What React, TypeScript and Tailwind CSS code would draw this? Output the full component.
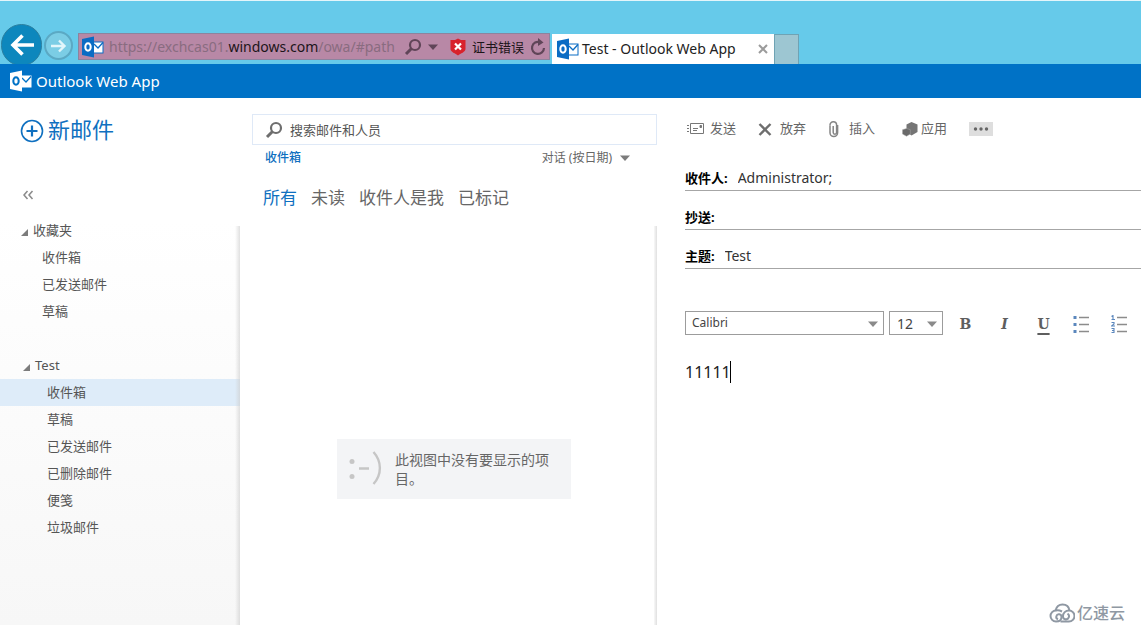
import { useState } from "react";

const FAVORITES = ["收件箱", "已发送邮件", "草稿"];

const FOLDERS = ["收件箱", "草稿", "已发送邮件", "已删除邮件", "便笺", "垃圾邮件"];

const FILTERS = ["所有", "未读", "收件人是我", "已标记"];

function OutlookLogo({ inverted = false }: { inverted?: boolean }) {
  const front = inverted ? "#ffffff" : "#0a6cc4";
  const back = inverted ? "#0072c6" : "#ffffff";
  return (
    <svg viewBox="0 0 22 22" className="h-[22px] w-[22px] shrink-0" aria-hidden="true">
      <rect x="11" y="6" width="10" height="11" fill={inverted ? front : back} stroke={front} />
      <path
        d="M12 8l4 4 5-5.500"
        fill="none"
        stroke={inverted ? back : front}
        strokeWidth="1.300"
      />
      <path d="M0 3L12 0.500V21.500L0 19z" fill={front} />
      <ellipse cx="6" cy="11" rx="2.700" ry="3.700" fill="none" stroke={back} strokeWidth="2" />
    </svg>
  );
}

function SearchIcon({ className }: { className: string }) {
  return (
    <svg viewBox="0 0 18 18" className={className} fill="none" stroke="currentColor" aria-hidden="true">
      <circle cx="11" cy="7" r="5" strokeWidth="2.200" />
      <path d="M7.500 10.500L2 16" strokeWidth="3" />
    </svg>
  );
}

function Caret({ className = "" }: { className?: string }) {
  return (
    <svg viewBox="0 0 10 6" className={`h-1.5 w-2.5 shrink-0 ${className}`} aria-hidden="true">
      <path d="M0 0.500h10L5 6z" fill="currentColor" />
    </svg>
  );
}

function BrowserBar() {
  return (
    <div className="flex h-16 items-end border-t border-[#e4f5fa] bg-[#66caea] pl-px">
      <div className="flex h-10 items-start overflow-hidden">
        <button
          type="button"
          aria-label="后退"
          className="flex h-[42px] w-[41px] shrink-0 items-center justify-center rounded-full border border-[#2c7f9f] bg-[#0d87bd] text-white"
        >
          <svg viewBox="0 0 24 24" className="h-6 w-6" fill="none" stroke="currentColor" strokeWidth="3.600">
            <path d="M24 12H3M12.500 2.500L3 12l9.500 9.500" />
          </svg>
        </button>
      </div>
      <button
        type="button"
        aria-label="前进"
        className="mb-1 ml-0.5 flex h-[29px] w-[29px] shrink-0 items-center justify-center rounded-full border-2 border-[#5ba9c4] bg-[#7bcde5] text-[#e2f6fb]"
      >
        <svg viewBox="0 0 16 16" className="h-4 w-4" fill="none" stroke="currentColor" strokeWidth="2.400">
          <path d="M0 8h13M8 2.500L13.500 8 8 13.500" />
        </svg>
      </button>

      <div className="mb-1 ml-[5px] flex h-[27px] w-[472px] shrink-0 items-center border border-[#8c849e] bg-[#b888a6] px-[3px]">
        <OutlookLogo />
        <span className="ml-[5px] grow whitespace-nowrap text-[14px] leading-5 text-[#896c80]">
          https://exchcas01.<span className="text-[#1c1519]">windows.com</span>/owa/#path
        </span>
        <button type="button" aria-label="搜索" className="text-[#604558]">
          <SearchIcon className="h-[18px] w-[18px]" />
        </button>
        <button type="button" aria-label="地址列表" className="ml-1.5 flex items-center text-[#604558]">
          <Caret />
        </button>
        <svg viewBox="0 0 16 18" className="ml-3 h-[18px] w-4 shrink-0" aria-hidden="true">
          <path d="M8 0.500l3 1.500h4.500v9c0 3-5 4.500-7.500 6.500-2.500-2-7.500-3.500-7.500-6.500v-9h4.500z" fill="#d8222c" />
          <path d="M5 5.500l6 6M11 5.500l-6 6" stroke="#fff" strokeWidth="2.200" />
        </svg>
        <button type="button" className="ml-1.5 shrink-0 whitespace-nowrap text-[13px] leading-5 text-[#1c1519]">
          证书错误
        </button>
        <button type="button" aria-label="刷新" className="ml-1.5 text-[#604558]">
          <svg viewBox="0 0 16 18" className="h-[18px] w-4" fill="none" aria-hidden="true">
            <path d="M10 4.200A6 6 0 1 0 14 10" stroke="currentColor" strokeWidth="2.200" />
            <path d="M8 0v8l5.500-3.500z" fill="currentColor" />
          </svg>
        </button>
      </div>

      <div className="ml-0.5 flex h-[30px] w-[222px] shrink-0 items-center bg-white pl-[5px] pr-1.5">
        <OutlookLogo />
        <span className="ml-[3px] grow whitespace-nowrap text-[14px] leading-5 text-[#222222]">
          Test - Outlook Web App
        </span>
        <button type="button" aria-label="关闭选项卡" className="text-[#9b9b9b]">
          <svg viewBox="0 0 10 10" className="h-2.5 w-2.5" stroke="currentColor" strokeWidth="2">
            <path d="M1 1l8 8M9 1L1 9" />
          </svg>
        </button>
      </div>
      <button
        type="button"
        aria-label="新建选项卡"
        className="h-[30px] w-[25px] shrink-0 border border-b-0 border-[#6fa3b4] bg-[#9dc6d2]"
      />
    </div>
  );
}

function GroupHeader({ label, className }: { label: string; className: string }) {
  return (
    <button type="button" className={`flex h-5 items-center text-[13px] leading-5 ${className}`}>
      <svg viewBox="0 0 8 8" className="mr-[5px] mt-1 h-2 w-2" aria-hidden="true">
        <path d="M8 1v7H1z" fill="#7c7c7c" />
      </svg>
      {label}
    </button>
  );
}

function Sidebar() {
  const [selected, setSelected] = useState("收件箱");

  return (
    <aside className="relative flex w-60 shrink-0 flex-col">
      <button type="button" className="ml-5 mt-[15px] flex h-8 items-center gap-1 self-start text-[#0f70c0]">
        <svg viewBox="0 0 24 24" className="mt-1 h-6 w-6" fill="none" stroke="currentColor" aria-hidden="true">
          <circle cx="12" cy="12" r="10.500" strokeWidth="1.600" />
          <path d="M12 6.500v11M6.500 12h11" strokeWidth="2.200" />
        </svg>
        <span className="text-[22px] leading-8">新邮件</span>
      </button>
      <button
        type="button"
        aria-label="折叠"
        className="ml-[22px] mt-10 flex h-5 w-3 items-center text-[#8a8a8a]"
      >
        <svg viewBox="0 0 12 10" className="h-2.5 w-3" fill="none" stroke="currentColor" strokeWidth="1.500">
          <path d="M5.500 1L2 5l3.500 4M10.500 1L7 5l3.500 4" />
        </svg>
      </button>

      <nav className="mt-[15px] grow bg-linear-to-b from-white to-[#f7f7f7] text-[13px] text-[#555555]">
        <GroupHeader label="收藏夹" className="pl-5" />
        <ul className="mt-1">
          {FAVORITES.map((name) => (
            <li key={name}>
              <button type="button" className="flex h-[27px] w-full items-center pl-[42px]">
                {name}
              </button>
            </li>
          ))}
        </ul>
        <GroupHeader label="Test" className="mt-[30px] pl-[22px]" />
        <ul className="mt-1">
          {FOLDERS.map((name) => (
            <li key={name}>
              <button
                type="button"
                onClick={() => setSelected(name)}
                className={`flex h-[27px] w-full items-center pl-[47px] ${
                  selected === name ? "bg-[#deecf9]" : ""
                }`}
              >
                {name}
              </button>
            </li>
          ))}
        </ul>
      </nav>
      <div className="pointer-events-none absolute bottom-0 right-0 top-[128px] w-[5px] bg-linear-to-r from-transparent to-[#cccccc]/60" />
    </aside>
  );
}

function MessageList() {
  const [filter, setFilter] = useState("所有");

  return (
    <section className="relative flex w-[417px] shrink-0 flex-col pl-3">
      <div className="mt-4 flex h-[31px] items-center border border-[#dfe9f7] pl-3">
        <SearchIcon className="h-[18px] w-[18px] shrink-0 text-[#6e6e6e]" />
        <input
          type="search"
          aria-label="搜索邮件和人员"
          placeholder="搜索邮件和人员"
          className="ml-[7px] min-w-0 grow bg-transparent text-[13px] leading-5 outline-none placeholder:text-[#555555]"
        />
      </div>
      <div className="flex h-6 items-center justify-between pl-[13px] pr-[27px] pt-0.5 text-[12px]">
        <span className="font-medium text-[#0f70c0]">收件箱</span>
        <button type="button" className="flex items-center gap-2 text-[#666666]">
          对话 (按日期)
          <Caret className="text-[#7c7c7c]" />
        </button>
      </div>
      <div className="mt-[13px] flex h-8 items-center gap-3.5 pl-[11px] text-[17px]">
        {FILTERS.map((name) => (
          <button
            key={name}
            type="button"
            onClick={() => setFilter(name)}
            className={filter === name ? "text-[#0f70c0]" : "text-[#666666]"}
          >
            {name}
          </button>
        ))}
      </div>
      <div className="ml-[85px] mt-[225px] flex h-[60px] w-[234px] items-center bg-[#f3f4f6] pl-3">
        <svg viewBox="0 0 34 36" className="h-9 w-[34px] shrink-0" fill="none" aria-hidden="true">
          <circle cx="3" cy="10.500" r="2.500" fill="#c6c6c6" />
          <circle cx="3" cy="25.500" r="2.500" fill="#c6c6c6" />
          <path d="M10 17.500h10M24.500 1c8.500 9.500 8.500 22.500 0 32" stroke="#c6c6c6" strokeWidth="2.400" />
        </svg>
        <p className="ml-3 w-40 text-[14px] leading-[19px] text-[#666666]">此视图中没有要显示的项目。</p>
      </div>
      <div className="pointer-events-none absolute bottom-0 right-0 top-[128px] w-[3px] bg-linear-to-r from-[#f8f8f8] to-[#e0e0e0]" />
    </section>
  );
}

function ComposeToolbar() {
  return (
    <div className="mt-[19px] flex h-6 items-center gap-[22px] pl-px text-[13px] text-[#666666]">
      <button type="button" className="flex items-center gap-1.5">
        <svg viewBox="0 0 18 14" className="h-3.5 w-[18px]" fill="none" stroke="#777777" aria-hidden="true">
          <path d="M4.500 1.500h13v10h-13zM1 3.500h2M1 6.500h2M1 9.500h2M7 6.500h5M7 8.500h4" />
          <path d="M14 3.500h1.500v2H14z" fill="#777777" />
        </svg>
        发送
      </button>
      <button type="button" className="flex items-center gap-1.5">
        <svg viewBox="0 0 16 14" className="h-3.5 w-4" fill="none" stroke="#6e6e6e" strokeWidth="2.400" aria-hidden="true">
          <path d="M1.500 2l11 11M12.500 2l-11 11" />
        </svg>
        放弃
      </button>
      <button type="button" className="flex items-center gap-1.5">
        <svg viewBox="-1 -1 15 18" className="h-[18px] w-[15px]" fill="none" stroke="#858585" strokeWidth="1.500" aria-hidden="true">
          <path d="M1 4.500V4a3.300 3.300 0 0 1 6.600 0v7.500a1.700 1.700 0 0 1-3.400 0V5" />
          <path d="M1 4.500v7.300a3.600 3.600 0 0 0 7.600 0V4" />
        </svg>
        插入
      </button>
      <button type="button" className="flex items-center gap-[3px]">
        <svg viewBox="0 0 21 16" className="h-4 w-[21px]" aria-hidden="true">
          <path d="M14.500 1l6 2.500v7.500l-6 3.500-5-3.500V3.500z" fill="#757575" />
          <path d="M9.500 7.500l3.800 1.200v4.300l-3.800 2.200L5.500 13V8.700z" fill="#6a6a6a" stroke="#a8a8a8" strokeWidth="0.500" />
        </svg>
        应用
      </button>
      <button
        type="button"
        aria-label="更多"
        className="flex h-3.5 w-6 items-center justify-center bg-[#dedede]"
      >
        <svg viewBox="0 0 16 4" className="h-1 w-4" fill="#666666">
          <circle cx="2.500" cy="2" r="1.700" />
          <circle cx="8" cy="2" r="1.700" />
          <circle cx="13.500" cy="2" r="1.700" />
        </svg>
      </button>
    </div>
  );
}

function Field({ id, label, value }: { id: string; label: string; value: string }) {
  return (
    <div className="flex h-[39px] items-end border-b border-[#a6a6a6] pb-0.5">
      <label htmlFor={id} className="shrink-0 text-[13px] font-bold leading-5 text-black">
        {label}
      </label>
      <input
        id={id}
        defaultValue={value}
        className="ml-2.5 h-5 min-w-0 grow bg-transparent text-[14px] leading-5 text-[#333333] outline-none"
      />
    </div>
  );
}

function FormatBar() {
  return (
    <div className="mt-[42px] flex h-6 items-center">
      <div className="relative h-6 w-[199px] shrink-0">
        <select
          aria-label="字体"
          className="block h-6 w-full appearance-none border border-[#9c9c9c] bg-white pl-1.5 text-[12px] text-[#444444]"
        >
          <option>Calibri</option>
        </select>
        <Caret className="pointer-events-none absolute right-1.5 top-2.5 text-[#8a8a8a]" />
      </div>
      <div className="relative ml-[5px] h-6 w-[54px] shrink-0">
        <select
          aria-label="字号"
          className="block h-6 w-full appearance-none border border-[#9c9c9c] bg-white pl-[7px] text-[14px] text-[#444444]"
        >
          <option>12</option>
        </select>
        <Caret className="pointer-events-none absolute right-1.5 top-2.5 text-[#8a8a8a]" />
      </div>
      <div className="ml-[3px] flex items-center pt-0.5 font-['DejaVu_Serif',serif] text-[14px] font-bold leading-6 text-[#5e5e5e]">
        <button type="button" aria-label="加粗" className="w-[39px] shrink-0">
          B
        </button>
        <button type="button" aria-label="倾斜" className="w-[39px] shrink-0 italic">
          I
        </button>
        <button
          type="button"
          aria-label="下划线"
          className="w-[39px] shrink-0 underline decoration-2 underline-offset-4"
        >
          U
        </button>
        <button type="button" aria-label="项目符号" className="flex w-9 shrink-0 justify-center">
          <svg viewBox="0 0 16 18" className="h-[18px] w-4">
            <path d="M6 2.500h10M6 9.500h10M6 16.500h10" stroke="#8c8c8c" strokeWidth="1.400" />
            <path d="M0.500 1h3v3h-3zM0.500 8h3v3h-3zM0.500 15h3v3h-3z" fill="#5b87bd" />
          </svg>
        </button>
        <button type="button" aria-label="编号" className="flex w-[39px] shrink-0 justify-center">
          <svg viewBox="0 0 16 18" className="h-[18px] w-4" fill="none">
            <path d="M6 2.500h10M6 9.500h10M6 16.500h10" stroke="#8c8c8c" strokeWidth="1.400" />
            <path
              d="M0.500 1.500L2 0.500v4M0.500 4.500h3.500M0.500 7.500h2.500v1.500l-2.500 2h3.500M0.500 13.500h2.500v2h-2M3 15.500v2H0.500"
              stroke="#5b87bd"
              strokeWidth="1.100"
            />
          </svg>
        </button>
      </div>
    </div>
  );
}

function Compose() {
  return (
    <main className="flex min-w-0 grow flex-col overflow-hidden pl-7">
      <ComposeToolbar />
      <form className="mt-[11px]">
        <Field id="to" label="收件人:" value="Administrator;" />
        <Field id="cc" label="抄送:" value="" />
        <Field id="subject" label="主题:" value="Test" />
        <FormatBar />
        <div className="mt-[26px] flex h-[22px] items-center">
          <textarea
            aria-label="邮件正文"
            rows={1}
            defaultValue="11111"
            className="field-sizing-content h-[22px] resize-none overflow-hidden bg-transparent text-[16px] leading-[22px] text-[#222222] outline-none"
          />
          <span className="-ml-px h-[22px] w-px bg-black" />
        </div>
      </form>
    </main>
  );
}

function Watermark() {
  return (
    <div className="absolute bottom-0 right-4 flex items-center gap-0.5 text-[#8f98a3]">
      <svg viewBox="0 0 26 20" className="h-5 w-[26px]" fill="none" stroke="currentColor" strokeWidth="2" aria-hidden="true">
        <path d="M6.500 7.500C7.500 3.500 10 1.500 13.500 1.500c4 0 6.500 2.500 7 6" />
        <path d="M13 8.500C11 7.500 9 7 7 7.500a5.500 5.500 0 0 0 0 11c3.500 0 5.500-2 5.500-4.500a2.600 2.600 0 1 0-3.500 2.300" />
        <path d="M11.500 18.500H20a5.500 5.500 0 0 0 0-11c-3.500 0-6 2.500-6 5.500a3 3 0 1 0 4.500-2.300" />
      </svg>
      <span className="text-[16px] font-medium leading-6">亿速云</span>
    </div>
  );
}

export default function App() {
  return (
    <div className="relative flex min-h-screen flex-col overflow-hidden bg-white font-['Noto_Sans','Noto_Sans_CJK_SC',sans-serif]">
      <BrowserBar />
      <header className="flex h-[34px] items-center gap-1 bg-[#0072c6] pl-2.5 text-white">
        <OutlookLogo inverted />
        <h1 className="text-[15px] leading-6">Outlook Web App</h1>
      </header>
      <div className="flex grow">
        <Sidebar />
        <MessageList />
        <Compose />
      </div>
      <Watermark />
    </div>
  );
}
